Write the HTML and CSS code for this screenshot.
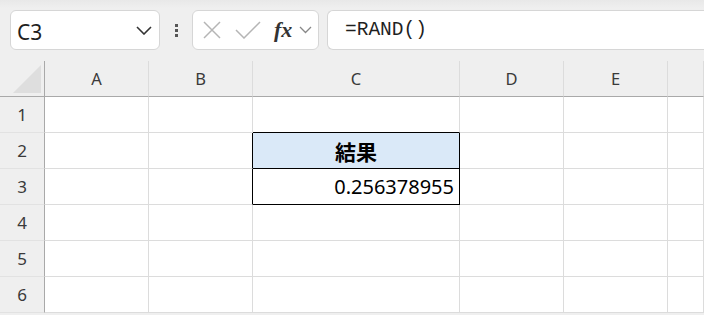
FILE: index.html
```html
<!DOCTYPE html>
<html lang="ja">
<head>
  <meta charset="UTF-8">
  <title>RAND</title>
  <link rel="stylesheet" href="styles.css">
</head>
<body>
  <div class="toolbar">
    <div class="name-box">
      <span class="name-text">C3</span>
      <svg class="chevron" width="16" height="9" viewBox="0 0 16 9"><path d="M1 1 L8 8 L15 1" fill="none" stroke="#333" stroke-width="1.6"/></svg>
    </div>
    <div class="dots"><i></i><i></i><i></i></div>
    <div class="fx-box">
      <svg width="20" height="20" viewBox="0 0 20 20"><path d="M2 2 L18 18 M18 2 L2 18" stroke="#b5b5b5" stroke-width="1.5"/></svg>
      <svg width="26" height="18" viewBox="0 0 26 18"><path d="M1 9 L9 17 L25 1" fill="none" stroke="#b5b5b5" stroke-width="1.5"/></svg>
      <span class="fx">fx</span>
      <svg width="13" height="8" viewBox="0 0 13 8"><path d="M1 1 L6.5 6.5 L12 1" fill="none" stroke="#888" stroke-width="1.3"/></svg>
    </div>
    <div class="formula-box">=RAND()</div>
  </div>

  <div class="sheet">
    <div class="corner"><span class="tri"></span></div>
    <div class="col-head">A</div>
    <div class="col-head">B</div>
    <div class="col-head">C</div>
    <div class="col-head">D</div>
    <div class="col-head">E</div>
    <div class="col-head"></div>

    <div class="row-head">1</div>
    <div class="cell"></div><div class="cell"></div><div class="cell edge-bottom"></div><div class="cell"></div><div class="cell"></div><div class="cell"></div>

    <div class="row-head">2</div>
    <div class="cell"></div><div class="cell edge-right"></div><div class="cell boxed title">結果</div><div class="cell"></div><div class="cell"></div><div class="cell"></div>

    <div class="row-head">3</div>
    <div class="cell"></div><div class="cell edge-right"></div><div class="cell boxed value">0.256378955</div><div class="cell"></div><div class="cell"></div><div class="cell"></div>

    <div class="row-head">4</div>
    <div class="cell"></div><div class="cell"></div><div class="cell"></div><div class="cell"></div><div class="cell"></div><div class="cell"></div>

    <div class="row-head">5</div>
    <div class="cell"></div><div class="cell"></div><div class="cell"></div><div class="cell"></div><div class="cell"></div><div class="cell"></div>

    <div class="row-head">6</div>
    <div class="cell"></div><div class="cell"></div><div class="cell"></div><div class="cell"></div><div class="cell"></div><div class="cell"></div>
  </div>
</body>
</html>
```

FILE: styles.css
```css
body {
  margin: 0;
  width: 704px;
  height: 315px;
  overflow: hidden;
  background-color: #efefef;
  font-family: "Noto Sans", "Noto Sans CJK JP", sans-serif;
  color: #222;
}
.toolbar {
  height: 61px;
  box-sizing: border-box;
  padding: 10px 0 11px 10px;
  display: flex;
  align-items: stretch;
  background: linear-gradient(#e8e8e8, #efefef 8px);
}
.name-box {
  width: 150px;
  box-sizing: border-box;
  background: #fff;
  border: 1px solid #d6d6d6;
  border-radius: 6px;
  display: flex;
  align-items: center;
  justify-content: space-between;
  padding: 0 7px 0 6px;
}
.name-text {
  font-size: 21px;
  color: #1f1f1f;
  padding-top: 3px;
}
.dots {
  width: 32px;
  display: flex;
  flex-direction: column;
  align-items: center;
  justify-content: center;
  gap: 2px;
}
.dots i {
  width: 3px;
  height: 3px;
  background: #555;
}
.fx-box {
  width: 127px;
  box-sizing: border-box;
  background: #fff;
  border: 1px solid #d6d6d6;
  border-radius: 6px;
  display: flex;
  align-items: center;
  padding: 0 5px 0 9px;
  gap: 13px;
}
.fx-box svg:nth-child(3) {
  margin-left: -4px;
}
.fx {
  font-family: "Liberation Serif", serif;
  font-style: italic;
  font-weight: bold;
  font-size: 22px;
  color: #333;
}
.fx-box svg:last-child {
  margin-left: -6px;
}
.formula-box {
  flex: 1;
  margin-left: 8px;
  background: #fff;
  border: 1px solid #d6d6d6;
  border-right: none;
  border-radius: 6px 0 0 6px;
  display: flex;
  align-items: center;
  padding-left: 17px;
  font-family: "Liberation Mono", monospace;
  font-size: 19.5px;
  color: #1f1f1f;
}
.sheet {
  display: grid;
  grid-template-columns: 45px 104px 104px 207px 104px 104px 1fr;
  grid-template-rows: 36px repeat(6, 36px);
}
.corner, .col-head, .row-head {
  background: #efefef;
  box-sizing: border-box;
  color: #3a3a3a;
}
.corner {
  border-right: 1px solid #a9a9a9;
  border-bottom: 1px solid #a9a9a9;
  position: relative;
}
.tri {
  position: absolute;
  left: 13px;
  top: 4px;
  width: 0;
  height: 0;
  border-left: 28px solid transparent;
  border-bottom: 28px solid #dedede;
}
.col-head {
  border-bottom: 1px solid #a9a9a9;
  border-right: 1px solid #dcdcdc;
  display: flex;
  align-items: center;
  justify-content: center;
  font-size: 16.5px;
}
.row-head {
  border-right: 1px solid #a9a9a9;
  border-bottom: 1px solid #e2e2e2;
  display: flex;
  align-items: center;
  justify-content: center;
  font-size: 17px;
}
.cell {
  background: #fff;
  box-sizing: border-box;
  border-right: 1px solid #dcdcdc;
  border-bottom: 1px solid #dcdcdc;
}
.edge-bottom {
  border-bottom-color: #000;
}
.edge-right {
  border-right-color: #000;
}
.boxed {
  border-right-color: #000;
  border-bottom-color: #000;
  display: flex;
  align-items: center;
  color: #000;
}
.title {
  background: #dae9f8;
  justify-content: center;
  font-family: "Noto Sans CJK JP", sans-serif;
  font-weight: bold;
  font-size: 21px;
}
.value {
  justify-content: flex-end;
  padding-right: 5px;
  font-size: 20px;
}
```
